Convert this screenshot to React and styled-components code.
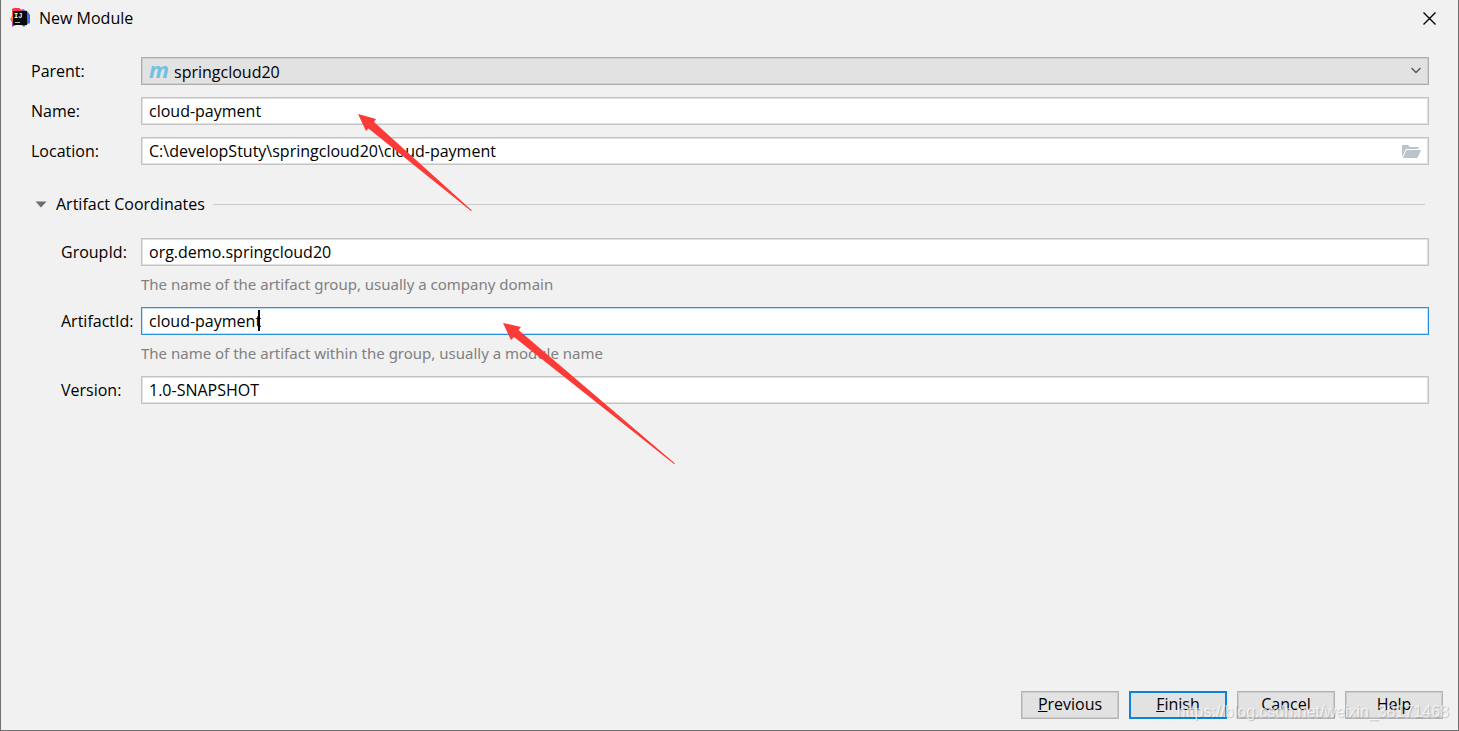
import React, { useState } from 'react';
import styled, { createGlobalStyle } from 'styled-components';

const GlobalStyle = createGlobalStyle`
  * {
    box-sizing: border-box;
  }

  body {
    margin: 0;
    background: #f1f1f1;
    color: #000;
    font-family: 'Open Sans', 'Noto Sans', sans-serif;
    font-size: 16px;
    line-height: 24px;
  }

  button,
  input,
  select {
    margin: 0;
    color: inherit;
    font: inherit;
  }
`;

const Dialog = styled.div`
  position: relative;
  min-height: 100vh;
  display: flex;
  flex-direction: column;
  background: #f1f1f1;
  border: solid #6f6f6f;
  border-width: 0 1px 1px;
  overflow: hidden;
`;

const TitleBar = styled.header`
  display: flex;
  align-items: center;
  gap: 8px;
  height: 36px;
  padding: 0 20px 0 8px;
`;

const Title = styled.h1`
  flex: 1;
  margin: 0;
  font-size: 16px;
  font-weight: 400;
`;

const CloseButton = styled.button`
  display: flex;
  padding: 2px;
  border: none;
  background: none;
`;

const Form = styled.form`
  flex: 1;
  display: flex;
  flex-direction: column;
`;

const Fields = styled.div`
  display: flex;
  flex-direction: column;
  gap: 12px;
  padding: 21px 29px 0 30px;
`;

const Row = styled.div`
  display: flex;
  align-items: center;
  padding-left: ${({ $indent }) => ($indent ? '30px' : '0')};
`;

const Label = styled.label`
  flex: none;
  width: ${({ $narrow }) => ($narrow ? '80px' : '110px')};
`;

const Control = styled.div`
  position: relative;
  flex: 1;
  display: flex;
`;

const TextInput = styled.input`
  width: 100%;
  height: 28px;
  padding: 0 7px 1px;
  border: 1px solid ${({ $active }) => ($active ? '#2a8fdf' : '#c4c4c4')};
  box-shadow: inset 0 0 0 1px ${({ $active }) => ($active ? '#c4e0f6' : '#e0e0e0')};
  border-radius: 0;
  outline: none;
  background: #fff;
`;

const Select = styled.select`
  width: 100%;
  height: 28px;
  padding: 2px 32px 0;
  appearance: none;
  border: 1px solid #adadad;
  box-shadow: inset 0 0 0 1px #d0d0d0;
  border-radius: 0;
  outline: none;
  background: #e2e2e2;
`;

const ModuleIcon = styled.span`
  position: absolute;
  left: 8px;
  top: 0;
  color: #70c1e0;
  font-size: 22px;
  font-style: italic;
  font-weight: 700;
  pointer-events: none;
`;

const ChevronHolder = styled.span`
  position: absolute;
  right: 8px;
  top: 10px;
  display: flex;
  pointer-events: none;
`;

const BrowseButton = styled.button`
  position: absolute;
  right: 8px;
  top: 7px;
  display: flex;
  padding: 0;
  border: none;
  background: none;
`;

const Caret = styled.span`
  position: absolute;
  left: 117px;
  top: 3px;
  width: 2px;
  height: 21px;
  background: #000;
`;

const SectionHeader = styled.div`
  display: flex;
  align-items: center;
  gap: 8px;
  padding: 27px 33px 22px 34px;
`;

const SectionToggle = styled.button`
  display: flex;
  align-items: center;
  gap: 9px;
  padding: 0;
  border: none;
  background: none;

  svg {
    transform: ${({ $open }) => ($open ? 'none' : 'rotate(-90deg)')};
  }
`;

const Rule = styled.span`
  flex: 1;
  height: 1px;
  background: #cbcbcb;
`;

const SectionBody = styled.div`
  padding: 0 29px 0 30px;
`;

const Hint = styled.p`
  margin: 6px 0 11px 110px;
  color: #808080;
  font-family: 'Noto Sans', sans-serif;
  font-size: 15px;
`;

const Footer = styled.footer`
  display: flex;
  justify-content: flex-end;
  gap: 10px;
  padding: 11px 15px;
`;

const Button = styled.button`
  width: 98px;
  height: 28px;
  padding: 0 0 2px;
  border: ${({ $primary }) => ($primary ? '2px solid #0f83dc' : '1px solid #b3b3b3')};
  box-shadow: ${({ $primary }) => ($primary ? 'none' : 'inset 0 0 0 1px #cdcdcd')};
  background: #e2e2e2;
  line-height: 22px;
`;

const Arrows = styled.svg`
  position: absolute;
  left: -1px;
  top: 0;
  pointer-events: none;
`;

const Watermark = styled.span`
  position: absolute;
  right: 9px;
  bottom: 6px;
  color: rgba(255, 255, 255, 0.7);
  font-family: 'Liberation Sans', Arial, sans-serif;
  font-size: 16px;
  text-shadow: 1px 1px 1px rgba(0, 0, 0, 0.2);
  pointer-events: none;
`;

const AppLogo = () => (
  <svg width="22" height="22" viewBox="0 0 22 22" aria-hidden="true">
    <defs>
      <linearGradient id="logoLeft" x1="0" y1="0" x2="0" y2="1">
        <stop offset="0" stopColor="#fe2d58" />
        <stop offset="0.3" stopColor="#fb4a45" />
        <stop offset="0.55" stopColor="#fb8a35" />
        <stop offset="0.7" stopColor="#d04a7e" />
        <stop offset="1" stopColor="#9a3fd0" />
      </linearGradient>
      <linearGradient id="logoRight" x1="0" y1="0" x2="1" y2="1">
        <stop offset="0" stopColor="#b04fb0" />
        <stop offset="0.4" stopColor="#4a62e0" />
        <stop offset="1" stopColor="#2f7df0" />
      </linearGradient>
    </defs>
    <path d="M10 4l4-2 5 3 2 3v8l-4 2-2 2-4-3z" fill="url(#logoRight)" />
    <path d="M3 2l2-1h5l4 3-3 14-4 0-4 2V15L1 12l2-3z" fill="url(#logoLeft)" />
    <rect x="4" y="4" width="14" height="14" fill="#0a0a0a" />
    <text x="5" y="11" fill="#fff" fontFamily="Liberation Mono, monospace" fontSize="7" fontWeight="700">
      IJ
    </text>
    <rect x="6" y="15" width="5" height="1" fill="#bbb" />
  </svg>
);

const CloseIcon = () => (
  <svg width="13" height="13" viewBox="0 0 13 13" stroke="#000" strokeWidth="1.4" aria-hidden="true">
    <path d="M.5 .5l12 12M12.500 .5l-12 12" />
  </svg>
);

const ChevronIcon = () => (
  <svg width="10" height="7" viewBox="0 0 10 7" fill="none" stroke="#555" strokeWidth="1.3" aria-hidden="true">
    <path d="M.5 1l4.500 4.500L9.500 1" />
  </svg>
);

const FolderIcon = () => (
  <svg width="19" height="15" viewBox="0 0 19 15" fill="#bcc4ca" aria-hidden="true">
    <path d="M0 13V1h6l2 2h8.500v2H4z" />
    <path d="M4.500 6H19l-3.500 8H.8z" />
  </svg>
);

const TriangleIcon = () => (
  <svg width="12" height="7" viewBox="0 0 12 7" fill="#6e6e6e" aria-hidden="true">
    <path d="M.5 .5h11L6 6.500z" />
  </svg>
);

const artifactFields = [
  {
    id: 'groupId',
    label: 'GroupId:',
    hint: 'The name of the artifact group, usually a company domain',
  },
  {
    id: 'artifactId',
    label: 'ArtifactId:',
    hint: 'The name of the artifact within the group, usually a module name',
    active: true,
  },
  { id: 'version', label: 'Version:' },
];

const App = () => {
  const [open, setOpen] = useState(true);
  const [values, setValues] = useState({
    name: 'cloud-payment',
    location: 'C:\\developStuty\\springcloud20\\cloud-payment',
    groupId: 'org.demo.springcloud20',
    artifactId: 'cloud-payment',
    version: '1.0-SNAPSHOT',
  });

  const handleChange = (e) => {
    setValues({ ...values, [e.target.id]: e.target.value });
  };

  return (
    <Dialog>
      <GlobalStyle />
      <TitleBar>
        <AppLogo />
        <Title>New Module</Title>
        <CloseButton type="button" aria-label="Close">
          <CloseIcon />
        </CloseButton>
      </TitleBar>
      <Form onSubmit={(e) => e.preventDefault()}>
        <Fields>
          <Row>
            <Label htmlFor="parent">Parent:</Label>
            <Control>
              <Select id="parent" defaultValue="springcloud20">
                <option value="springcloud20">springcloud20</option>
              </Select>
              <ModuleIcon aria-hidden="true">m</ModuleIcon>
              <ChevronHolder>
                <ChevronIcon />
              </ChevronHolder>
            </Control>
          </Row>
          <Row>
            <Label htmlFor="name">Name:</Label>
            <Control>
              <TextInput id="name" value={values.name} onChange={handleChange} />
            </Control>
          </Row>
          <Row>
            <Label htmlFor="location">Location:</Label>
            <Control>
              <TextInput id="location" value={values.location} onChange={handleChange} />
              <BrowseButton type="button" aria-label="Browse">
                <FolderIcon />
              </BrowseButton>
            </Control>
          </Row>
        </Fields>
        <SectionHeader>
          <SectionToggle type="button" $open={open} aria-expanded={open} onClick={() => setOpen(!open)}>
            <TriangleIcon />
            Artifact Coordinates
          </SectionToggle>
          <Rule />
        </SectionHeader>
        {open && (
          <SectionBody>
            {artifactFields.map(({ id, label, hint, active }) => (
              <React.Fragment key={id}>
                <Row $indent>
                  <Label htmlFor={id} $narrow>
                    {label}
                  </Label>
                  <Control>
                    <TextInput id={id} value={values[id]} onChange={handleChange} $active={active} />
                    {active && <Caret />}
                  </Control>
                </Row>
                {hint && <Hint>{hint}</Hint>}
              </React.Fragment>
            ))}
          </SectionBody>
        )}
      </Form>
      <Footer>
        <Button type="button">
          <u>P</u>revious
        </Button>
        <Button type="button" $primary>
          <u>F</u>inish
        </Button>
        <Button type="button">Cancel</Button>
        <Button type="button">Help</Button>
      </Footer>
      <Arrows width="700" height="480" viewBox="0 0 700 480" fill="#fc3b38" aria-hidden="true">
        <path d="M358 114L376 119L374 122L472 210.500L471 211L368.500 128.500L366 131Z" />
        <path d="M503 323L521 327L518.500 330L675 463.500L674 464L514 337L511 340Z" />
      </Arrows>
      <Watermark>https://blog.csdn.net/weixin_38171468</Watermark>
    </Dialog>
  );
};

export default App;
